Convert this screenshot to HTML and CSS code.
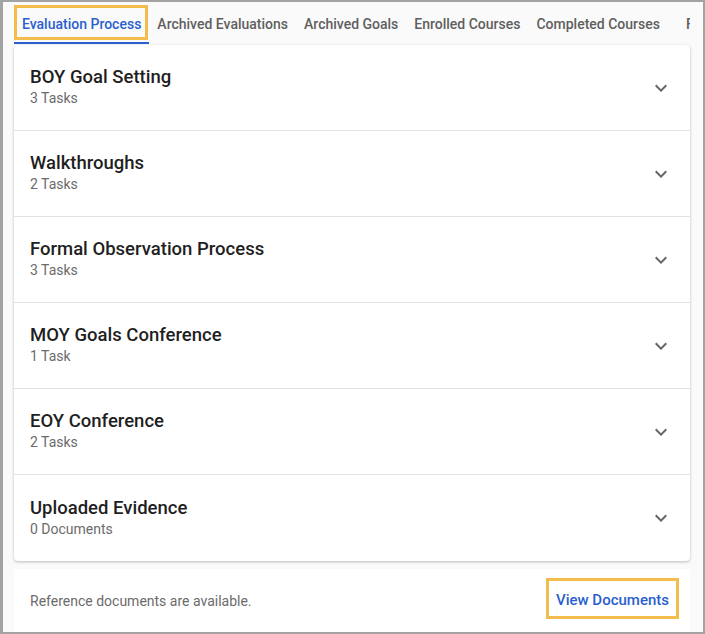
FILE: index.html
```html
<!DOCTYPE html>
<html lang="en">
<head>
  <meta charset="UTF-8">
  <meta name="viewport" content="width=device-width, initial-scale=1.0">
  <title>Evaluation Process</title>
  <link rel="stylesheet" href="styles.css">
</head>
<body>
  <div class="frame">
    <nav class="tabs">
      <a class="tab active highlight">Evaluation Process</a>
      <a class="tab">Archived Evaluations</a>
      <a class="tab">Archived Goals</a>
      <a class="tab">Enrolled Courses</a>
      <a class="tab">Completed Courses</a>
      <a class="tab more">Forms</a>
    </nav>

    <section class="card">
      <div class="row">
        <div class="row-text">
          <h2>BOY Goal Setting</h2>
          <p>3 Tasks</p>
        </div>
        <svg class="chevron" viewBox="0 0 24 24"><path d="M16.59 8.59L12 13.17 7.41 8.59 6 10l6 6 6-6z"/></svg>
      </div>
      <div class="row">
        <div class="row-text">
          <h2>Walkthroughs</h2>
          <p>2 Tasks</p>
        </div>
        <svg class="chevron" viewBox="0 0 24 24"><path d="M16.59 8.59L12 13.17 7.41 8.59 6 10l6 6 6-6z"/></svg>
      </div>
      <div class="row">
        <div class="row-text">
          <h2>Formal Observation Process</h2>
          <p>3 Tasks</p>
        </div>
        <svg class="chevron" viewBox="0 0 24 24"><path d="M16.59 8.59L12 13.17 7.41 8.59 6 10l6 6 6-6z"/></svg>
      </div>
      <div class="row">
        <div class="row-text">
          <h2>MOY Goals Conference</h2>
          <p>1 Task</p>
        </div>
        <svg class="chevron" viewBox="0 0 24 24"><path d="M16.59 8.59L12 13.17 7.41 8.59 6 10l6 6 6-6z"/></svg>
      </div>
      <div class="row">
        <div class="row-text">
          <h2>EOY Conference</h2>
          <p>2 Tasks</p>
        </div>
        <svg class="chevron" viewBox="0 0 24 24"><path d="M16.59 8.59L12 13.17 7.41 8.59 6 10l6 6 6-6z"/></svg>
      </div>
      <div class="row">
        <div class="row-text">
          <h2>Uploaded Evidence</h2>
          <p>0 Documents</p>
        </div>
        <svg class="chevron" viewBox="0 0 24 24"><path d="M16.59 8.59L12 13.17 7.41 8.59 6 10l6 6 6-6z"/></svg>
      </div>
    </section>

    <div class="docs">
      <span>Reference documents are available.</span>
      <button class="docs-btn">View Documents</button>
    </div>
  </div>
</body>
</html>
```

FILE: styles.css
```css
body {
  margin: 0;
  font-family: Roboto, "Liberation Sans", sans-serif;
}
.frame {
  height: 634px;
  box-sizing: border-box;
  border: 2px solid #a3a3a3;
  border-left-width: 3px;
  background: #fafafa;
  padding: 0 13px 0 11px;
  overflow: hidden;
}
.tabs {
  display: flex;
  white-space: nowrap;
  overflow: hidden;
}
.tab {
  position: relative;
  padding: 0 8px;
  height: 40px;
  line-height: 44px;
  font-size: 14px;
  font-weight: 500;
  color: #5f5f5f;
  border-bottom: 2px solid transparent;
}
.tab.active {
  color: #2b5fce;
  border-bottom-color: #2b5fce;
}
.tab.more {
  margin-left: 10px;
}
.highlight::after {
  content: "";
  position: absolute;
  top: 3px;
  left: 0;
  right: 1px;
  bottom: 2px;
  border: 3px solid #f3bd4e;
}
.card {
  margin-top: 1px;
  background: #fff;
  border-radius: 4px;
  box-shadow: 0 1px 3px rgba(0, 0, 0, 0.25);
}
.row {
  display: flex;
  align-items: center;
  height: 86px;
  box-sizing: border-box;
  padding: 0 17px 0 16px;
  border-bottom: 1px solid #e2e2e2;
}
.row:last-child {
  border-bottom: none;
}
.row-text {
  flex: 1;
  padding-bottom: 1px;
}
.row h2 {
  margin: 0;
  font-size: 18.5px;
  font-weight: 500;
  line-height: 22px;
  color: #1f1f1f;
}
.row p {
  margin: 0;
  font-size: 14px;
  line-height: 20px;
  color: #6b6b6b;
}
.chevron {
  width: 24px;
  height: 24px;
  fill: #666;
}
.docs {
  display: flex;
  align-items: center;
  justify-content: space-between;
  margin-top: 8px;
  height: 64px;
  padding: 0 11px 0 16px;
  background: #fff;
  font-size: 14px;
  color: #6b6b6b;
}
.docs-btn {
  height: 41px;
  margin-top: -6px;
  padding: 4px 7px 0;
  background: #fff;
  border: 3px solid #f3bd4e;
  font-family: inherit;
  font-size: 15px;
  font-weight: 500;
  color: #2b5fce;
}
```
